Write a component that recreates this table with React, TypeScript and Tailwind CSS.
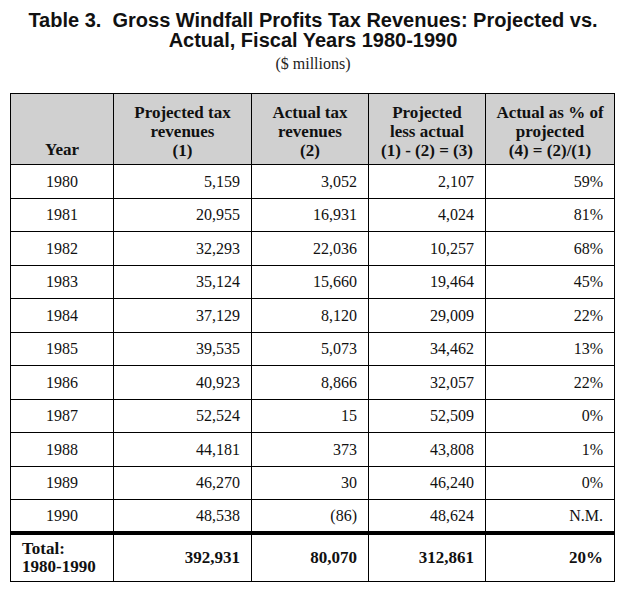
const rows: [string, string, string, string, string][] = [
  ["1980", "5,159", "3,052", "2,107", "59%"],
  ["1981", "20,955", "16,931", "4,024", "81%"],
  ["1982", "32,293", "22,036", "10,257", "68%"],
  ["1983", "35,124", "15,660", "19,464", "45%"],
  ["1984", "37,129", "8,120", "29,009", "22%"],
  ["1985", "39,535", "5,073", "34,462", "13%"],
  ["1986", "40,923", "8,866", "32,057", "22%"],
  ["1987", "52,524", "15", "52,509", "0%"],
  ["1988", "44,181", "373", "43,808", "1%"],
  ["1989", "46,270", "30", "46,240", "0%"],
  ["1990", "48,538", "(86)", "48,624", "N.M."],
];

const serif = "font-['Liberation_Serif','Times_New_Roman',serif]";

export default function App() {
  return (
    <div className="w-[626px] h-[595px] bg-white text-black">
      {/* Title */}
      <div className="pt-[10px] text-center font-['Liberation_Sans',Arial,sans-serif] text-[20px] font-bold leading-[20px] text-[#111]">
        <div className="whitespace-pre">Table 3.  Gross Windfall Profits Tax Revenues: Projected vs.</div>
        <div>Actual, Fiscal Years 1980-1990</div>
      </div>
      <div className={`${serif} mt-[4px] text-center text-[16px] leading-[20px] text-[#222]`}>
        ($ millions)
      </div>

      {/* Table */}
      <div className="pl-[10px] pt-[19px]">
        <table className={`${serif} w-[604px] table-fixed border-collapse text-[16px] leading-[19px] text-[#111]`}>
          <colgroup>
            <col className="w-[103px]" />
            <col className="w-[138px]" />
            <col className="w-[117px]" />
            <col className="w-[117px]" />
            <col className="w-[129px]" />
          </colgroup>
          <thead>
            <tr className="h-[71px] bg-[#d0d0d0] text-[17px] font-bold leading-[19px]">
              <th className="border border-black pb-[5px] align-bottom">Year</th>
              <th className="border border-black px-1 pb-[4px] align-bottom">
                Projected tax
                <br />
                revenues
                <br />
                (1)
              </th>
              <th className="border border-black px-1 pb-[4px] align-bottom">
                Actual tax
                <br />
                revenues
                <br />
                (2)
              </th>
              <th className="border border-black px-1 pb-[4px] align-bottom">
                Projected
                <br />
                less actual
                <br />
                (1) - (2) = (3)
              </th>
              <th className="border border-black px-1 pb-[4px] align-bottom">
                Actual as % of
                <br />
                projected
                <br />
                (4) = (2)/(1)
              </th>
            </tr>
          </thead>
          <tbody>
            {rows.map((r, i) => (
              <tr key={r[0]} className={i === rows.length - 1 ? "h-[33px]" : "h-[33.5px]"}>
                <td className="border border-black text-center">{r[0]}</td>
                <td className="border border-black pr-[11px] text-right">{r[1]}</td>
                <td className="border border-black pr-[11px] text-right">{r[2]}</td>
                <td className="border border-black pr-[11px] text-right">{r[3]}</td>
                <td className="border border-black pr-[11px] text-right">{r[4]}</td>
              </tr>
            ))}
            <tr className="h-[49px] border-t-[4px] border-black text-[17px] font-bold">
              <td className="border border-t-[4px] border-black pl-[11px] text-left leading-[18px]">
                Total:
                <br />
                1980-1990
              </td>
              <td className="border border-t-[4px] border-black pr-[11px] text-right">392,931</td>
              <td className="border border-t-[4px] border-black pr-[11px] text-right">80,070</td>
              <td className="border border-t-[4px] border-black pr-[11px] text-right">312,861</td>
              <td className="border border-t-[4px] border-black pr-[11px] text-right">20%</td>
            </tr>
          </tbody>
        </table>
      </div>
    </div>
  );
}
